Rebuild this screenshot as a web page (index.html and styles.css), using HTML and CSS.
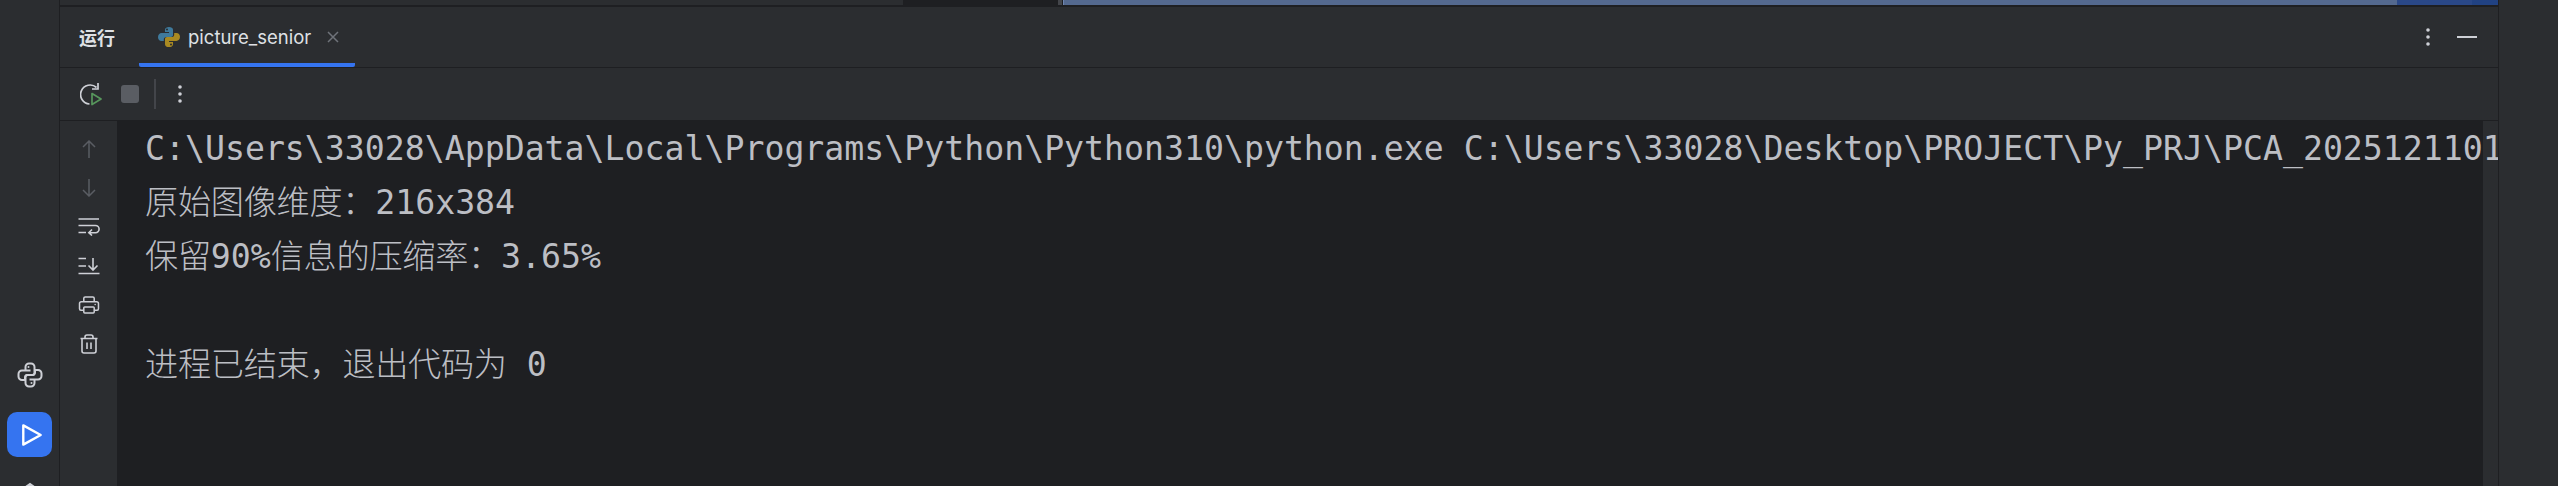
FILE: index.html
```html
<!DOCTYPE html>
<html lang="zh">
<head>
<meta charset="utf-8">
<title>运行 - picture_senior</title>
<link rel="stylesheet" href="styles.css">
</head>
<body>
<div class="app">
  <aside class="rail rail-left">
    <svg class="rail-python" viewBox="0 0 26 26" fill="none" stroke="#ced0d6" stroke-width="2">
      <path d="M13.5 8.5H8.5V5A3.5 3.5 0 0 1 12 1.5h2A3.5 3.5 0 0 1 17.5 5V11a2 2 0 0 1-2 2H10.5A2.5 2.5 0 0 0 8 15.5V18H5a3.5 3.5 0 0 1-3.5-3.5V12A3.5 3.5 0 0 1 5 8.5H8.5"/>
      <path d="M12.5 17.5H17.5V21A3.5 3.5 0 0 1 14 24.5h-2A3.5 3.5 0 0 1 8.5 21V15a2 2 0 0 1 2-2H15.5A2.5 2.5 0 0 0 18 10.5V8H21a3.5 3.5 0 0 1 3.5 3.5V14A3.5 3.5 0 0 1 21 17.5H17.5"/>
      <circle cx="11.5" cy="5" r="1" fill="#ced0d6" stroke="none"/>
      <circle cx="14.5" cy="21" r="1" fill="#ced0d6" stroke="none"/>
    </svg>
    <div class="run-button">
      <svg viewBox="0 0 24 26" fill="none" stroke="#ffffff" stroke-width="2.6" stroke-linejoin="round"><path d="M2.5 2.5L21.5 13L2.5 23.5Z"/></svg>
    </div>
    <svg class="rail-partial" viewBox="0 0 26 26" fill="none" stroke="#ced0d6" stroke-width="2"><path d="M3 9L13 2L23 9V23H3Z"/></svg>
  </aside>

  <main class="panel">
    <div class="strip">
      <div class="strip-plain"></div>
      <div class="strip-dark"></div>
      <div class="strip-grip"></div>
      <div class="strip-select"></div>
      <div class="strip-blue"></div>
      <div class="strip-blue-end"></div>
    </div>

    <header class="header">
      <h1 class="title">运行</h1>
      <div class="tab">
        <svg class="tab-icon" viewBox="0 0 22 22">
          <path fill="#3f7a9c" d="M7 8V3.8C7 1.8 8.8 1 11 1s4 .8 4 2.8V9c0 1.2-.8 2-2 2H8.500C6.800 11 5.800 12 5.800 13.600V15H3.600C1.500 15 0 13.500 0 11.200S1.500 7 3.600 7H11V6H7Z"/>
          <path fill="#a98a22" d="M15 14V18.200C15 20.200 13.200 21 11 21s-4-.8-4-2.800V13c0-1.200.8-2 2-2h4.500c1.700 0 2.700-1 2.700-2.600V7h2.200C20.500 7 22 8.500 22 10.800S20.500 15 18.400 15H11v1h4Z"/>
          <circle cx="9" cy="3.600" r="1" fill="#2b2d30"/>
          <circle cx="13" cy="18.400" r="1" fill="#2b2d30"/>
        </svg>
        <span class="tab-name">picture_senior</span>
        <svg class="tab-close" viewBox="0 0 12 12" fill="none" stroke="#6f737a" stroke-width="1.500"><path d="M1 1L11 11M11 1L1 11"/></svg>
      </div>
      <div class="header-actions">
        <svg class="dots" viewBox="0 0 4 18" fill="#ced0d6"><circle cx="2" cy="2" r="1.800"/><circle cx="2" cy="9" r="1.800"/><circle cx="2" cy="16" r="1.800"/></svg>
        <div class="minimize"></div>
      </div>
    </header>

    <div class="toolbar">
      <svg class="tool-rerun" viewBox="0 0 22 24" fill="none" stroke-width="1.700">
        <path stroke="#ced0d6" d="M16.500 5.500A9.500 9.500 0 1 0 9.500 22"/>
        <path stroke="#ced0d6" d="M18 1V7H12"/>
        <path stroke="#57965c" stroke-linejoin="round" d="M12 11.500L21 17L12 22.500Z"/>
      </svg>
      <div class="tool-stop"></div>
      <div class="tool-sep"></div>
      <svg class="dots" viewBox="0 0 4 18" fill="#ced0d6"><circle cx="2" cy="2" r="1.800"/><circle cx="2" cy="9" r="1.800"/><circle cx="2" cy="16" r="1.800"/></svg>
    </div>

    <div class="workspace">
      <nav class="gutter">
        <div class="gutter-cell">
          <svg class="g-arrow" viewBox="0 0 14 18" fill="none" stroke="#5a5d63" stroke-width="1.500"><path d="M7 18V1M1 7L7 1L13 7"/></svg>
        </div>
        <div class="gutter-cell">
          <svg class="g-arrow" viewBox="0 0 14 18" fill="none" stroke="#5a5d63" stroke-width="1.500"><path d="M7 0V17M1 11L7 17L13 11"/></svg>
        </div>
        <div class="gutter-cell">
          <svg class="g-wide" viewBox="0 0 22 18" fill="none" stroke="#ced0d6" stroke-width="1.600"><path d="M0.500 1H21M0.500 7.500H17.500A3.600 3.600 0 0 1 17.500 14.700H11M14 11.500L10.800 14.700L14 17.500M0.500 14.500H8"/></svg>
        </div>
        <div class="gutter-cell">
          <svg class="g-wide" viewBox="0 0 22 18" fill="none" stroke="#ced0d6" stroke-width="1.600"><path d="M0.500 1.500H8M0.500 9H8M0.500 16.500H21.500M15 1V13M10.500 8.500L15 13L19.500 8.500"/></svg>
        </div>
        <div class="gutter-cell">
          <svg class="g-wide" viewBox="0 0 22 19" fill="none" stroke="#ced0d6" stroke-width="1.600" stroke-linejoin="round"><path d="M5.500 6V2.500A1.500 1.500 0 0 1 7 1H15A1.500 1.500 0 0 1 16.500 2.500V6M5 15H2.500A1.500 1.500 0 0 1 1 13.500V8A2 2 0 0 1 3 6H19A2 2 0 0 1 21 8V13.500A1.500 1.500 0 0 1 19.500 15H17"/><rect x="5.500" y="11.500" width="11" height="6.500" rx="1"/><circle cx="17.500" cy="9" r=".8" fill="#ced0d6" stroke="none"/></svg>
        </div>
        <div class="gutter-cell">
          <svg class="g-trash" viewBox="0 0 18 20" fill="none" stroke="#ced0d6" stroke-width="1.600" stroke-linejoin="round"><path d="M.5 4.500H17.500M5 4.500V3A2 2 0 0 1 7 1H11A2 2 0 0 1 13 3V4.500M2 4.500V17A2 2 0 0 0 4 19H14A2 2 0 0 0 16 17V4.500M7 8.500V15M11 8.500V15"/></svg>
        </div>
      </nav>
      <section class="console">
        <div class="line">C:\Users\33028\AppData\Local\Programs\Python\Python310\python.exe C:\Users\33028\Desktop\PROJECT\Py_PRJ\PCA_2025121101</div>
        <div class="line"><span class="cjk">原始图像维度：</span>216x384</div>
        <div class="line"><span class="cjk">保留</span>90%<span class="cjk">信息的压缩率：</span>3.65%</div>
        <div class="line"></div>
        <div class="line"><span class="cjk">进程已结束，退出代码为</span> 0</div>
      </section>
    </div>
  </main>

  <aside class="rail rail-right"></aside>
</div>
</body>
</html>
```
FILE: styles.css
```css
* { box-sizing: border-box; }
html, body { margin: 0; height: 100%; background: #2b2d30; overflow: hidden; }
svg { display: block; flex: none; }

.app { display: flex; width: 2558px; height: 486px; overflow: hidden; }

.rail { flex: none; background: #2b2d30; }
.rail-left {
  width: 60px;
  border-right: 1px solid #1e1f22;
  display: flex;
  flex-direction: column;
  align-items: center;
  padding-top: 362px;
  overflow: hidden;
}
.rail-right { width: 60px; border-left: 1px solid #1e1f22; }
.rail-python { width: 26px; height: 26px; }
.run-button {
  flex: none;
  width: 45px;
  height: 45px;
  margin-top: 24px;
  border-radius: 10px;
  background: #3574f0;
  display: flex;
  align-items: center;
  justify-content: center;
  padding-left: 4px;
}
.run-button svg { width: 22px; height: 24px; }
.rail-partial { width: 26px; height: 26px; margin-top: 25px; }

.panel { flex: 1; min-width: 0; display: flex; flex-direction: column; }

.strip { flex: none; height: 7px; display: flex; border-bottom: 2px solid #1e1f22; background: #1e1f22; }
.strip-plain { width: 843px; background: #2b2d30; }
.strip-dark { width: 154px; }
.strip-grip { width: 4px; margin-left: 1px; background: #43454a; }
.strip-select { width: 1334px; margin-left: 1px; background: #54698f; border-left: 1px solid #6f86b0; }
.strip-blue { width: 75px; background: #2a4888; }
.strip-blue-end { flex: 1; background: #214283; }

.header {
  flex: none;
  height: 61px;
  display: flex;
  align-items: stretch;
  padding-left: 19px;
  background: #2b2d30;
  border-bottom: 1px solid #1e1f22;
}
.title {
  margin: 0 24px 0 0;
  align-self: center;
  font: 700 18px "Noto Sans CJK SC", sans-serif;
  color: #dfe1e5;
}
.tab {
  width: 216px;
  display: flex;
  align-items: center;
  padding: 4px 0 0 19px;
  border-bottom: 4px solid #3574f0;
  border-radius: 0 0 2px 2px;
}
.tab-icon { width: 22px; height: 22px; }
.tab-name {
  margin-left: 8px;
  font: 400 18.5px Inter, "Open Sans", sans-serif;
  color: #dfe1e5;
  width: 121px;
  white-space: nowrap;
}
.tab-close { width: 12px; height: 12px; margin-left: 18px; }
.header-actions { margin-left: auto; display: flex; align-items: center; padding-right: 21px; }
.header-actions .dots { margin-right: 27px; }
.minimize { width: 20px; height: 2px; background: #ced0d6; }
.dots { width: 4px; height: 18px; }

.toolbar {
  flex: none;
  height: 53px;
  display: flex;
  align-items: center;
  padding-left: 20px;
  background: #2b2d30;
  border-bottom: 1px solid #1e1f22;
}
.tool-rerun { width: 22px; height: 24px; }
.tool-stop { width: 18px; height: 18px; margin-left: 19px; border-radius: 3px; background: #5a5d63; }
.tool-sep { width: 2px; height: 30px; margin-left: 15px; background: #43454a; }
.toolbar .dots { margin-left: 22px; }

.workspace { flex: 1; min-height: 0; display: flex; }
.gutter {
  flex: none;
  width: 57px;
  padding-top: 8px;
  background: #2b2d30;
  display: flex;
  flex-direction: column;
}
.gutter-cell { height: 39px; display: flex; align-items: center; justify-content: center; }
.g-arrow { width: 14px; height: 18px; }
.g-wide { width: 22px; height: 18px; }
.g-trash { width: 18px; height: 20px; }

.console {
  flex: 1;
  min-width: 0;
  overflow: hidden;
  padding: 1px 0 0 28px;
  background: linear-gradient(to left, #2b2d30 15px, #1e1f22 15px);
}
.line {
  height: 54px;
  line-height: 54px;
  white-space: nowrap;
  color: #bcbec4;
  font-family: "DejaVu Sans Mono", "Noto Sans CJK SC", monospace;
  font-size: 33.2px;
}
.cjk {
  font-family: "Noto Sans CJK SC", sans-serif;
  font-weight: 300;
  letter-spacing: -0.3px;
  line-height: 0;
}
```
